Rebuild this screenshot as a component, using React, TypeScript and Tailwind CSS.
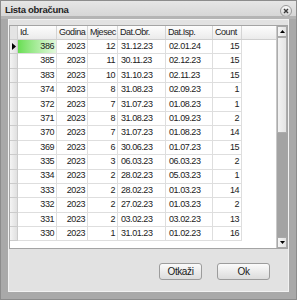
const rows = [
  ["386", "2023", "12", "31.12.23", "02.01.24", "15"],
  ["385", "2023", "11", "30.11.23", "02.12.23", "15"],
  ["383", "2023", "10", "31.10.23", "02.11.23", "15"],
  ["374", "2023", "8", "31.08.23", "02.09.23", "1"],
  ["372", "2023", "7", "31.07.23", "01.08.23", "1"],
  ["371", "2023", "8", "31.08.23", "01.09.23", "2"],
  ["370", "2023", "7", "31.07.23", "01.08.23", "14"],
  ["369", "2023", "6", "30.06.23", "01.07.23", "15"],
  ["335", "2023", "3", "06.03.23", "06.03.23", "2"],
  ["334", "2023", "2", "28.02.23", "05.03.23", "1"],
  ["333", "2023", "2", "28.02.23", "01.03.23", "14"],
  ["332", "2023", "2", "27.02.23", "01.03.23", "2"],
  ["331", "2023", "2", "03.02.23", "03.02.23", "13"],
  ["330", "2023", "1", "31.01.23", "01.02.23", "16"],
];

const cols = [
  { w: "w-[39px]", right: true },
  { w: "w-[31px]", right: true },
  { w: "w-[30px]", right: true },
  { w: "w-[48px]", right: false },
  { w: "w-[47px]", right: false },
  { w: "w-[29px]", right: true },
];

const headers = ["Id.", "Godina", "Mjesec", "Dat.Obr.", "Dat.Isp.", "Count"];

const btn =
  "h-[17px] rounded-[3px] border border-[#9c9c9c] bg-gradient-to-b from-[#fbfbfb] to-[#dcdcdc] text-[10px] tracking-[-0.4px] text-[#1a1a1a] flex items-center justify-center";

export default function App() {
  return (
    <div className="w-[297px] h-[300px] flex flex-col border border-[#8c8c8c] bg-[#dadada] font-['Liberation_Sans',Arial,sans-serif]">
      {/* title bar */}
      <div className="h-[15px] flex items-center justify-between pl-[4px] pr-[4px] bg-gradient-to-b from-[#e6e6e6] to-[#d6d6d6]">
        <span className="text-[9.5px] font-bold tracking-[-0.3px] text-[#1e1e1e] mt-[3px]">Lista obračuna</span>
        <div className="w-[12px] h-[12px] mt-[4px] rounded-full border border-[#9a9a9a] bg-gradient-to-b from-[#fafafa] to-[#d2d2d2] flex items-center justify-center">
          <svg width="6" height="6" viewBox="0 0 6 6">
            <path d="M1 1L5 5M5 1L1 5" stroke="#3a3a3a" strokeWidth="1.4" />
          </svg>
        </div>
      </div>

      {/* frame */}
      <div className="flex-1 flex flex-col bg-[#a9a9a9] border-t-[3px] border-[#b4b4b4] px-[7px] pb-[7px]">
        <div className="flex-1 flex flex-col border border-[#f2f2f2] bg-[#e2e2e2] pt-[5px]">
          {/* grid */}
          <div className="h-[224px] border border-[#a4a4a4] bg-white flex">
            <div className="flex-1 flex flex-col text-[9px] tracking-[-0.45px] text-[#222]">
              {/* header */}
              <div className="h-[14px] flex bg-gradient-to-b from-[#fdfdfd] to-[#ebebeb] border-b border-[#cfcfcf]">
                <div className="w-[8px] border-r border-[#cfcfcf] bg-[#e4e4e4]" />
                {headers.map((h, i) => (
                  <div
                    key={h}
                    className={`${cols[i].w} border-r border-[#d4d4d4] pl-[2px] flex items-center whitespace-nowrap overflow-hidden`}
                  >
                    {h}
                  </div>
                ))}
              </div>
              {rows.map((r, ri) => (
                <div key={ri} className="h-[14.4px] flex">
                  <div className="w-[8px] border-r border-b border-[#cbcbcb] bg-gradient-to-r from-[#f4f4f4] to-[#e0e0e0] flex items-center justify-center">
                    {ri === 0 ? (
                      <svg width="4" height="7" viewBox="0 0 4 7">
                        <path d="M0 0L4 3.5L0 7Z" fill="#000" />
                      </svg>
                    ) : null}
                  </div>
                  {r.map((v, ci) => (
                    <div
                      key={ci}
                      className={`${cols[ci].w} border-r border-b border-[#dedede] flex items-center ${
                        cols[ci].right ? "justify-end pr-[2px]" : "pl-[3px]"
                      } ${
                        ri === 0 && ci === 0
                          ? "bg-gradient-to-r from-[#68de52] to-[#e2f8dc]"
                          : ""
                      }`}
                    >
                      {v}
                    </div>
                  ))}
                </div>
              ))}
            </div>
            {/* scrollbar */}
            <div className="w-[11px] flex flex-col border-l border-[#c8c8c8]">
              <div className="h-[11px] border border-[#a8a8a8] bg-gradient-to-r from-[#f6f6f6] to-[#e2e2e2] flex items-center justify-center">
                <svg width="5" height="3" viewBox="0 0 5 3">
                  <path d="M0 3L2.5 0L5 3Z" fill="#000" />
                </svg>
              </div>
              <div className="h-[96px] border border-[#acacac] bg-gradient-to-r from-[#f2f2f2] to-[#e4e4e4]" />
              <div className="flex-1 bg-[#a3a3a3]" />
              <div className="h-[11px] border border-[#a8a8a8] bg-gradient-to-r from-[#f6f6f6] to-[#e2e2e2] flex items-center justify-center">
                <svg width="5" height="3" viewBox="0 0 5 3">
                  <path d="M0 0L5 0L2.5 3Z" fill="#000" />
                </svg>
              </div>
            </div>
          </div>
          {/* buttons */}
          <div className="flex justify-end gap-[15px] pr-[18px] mt-[14px]">
            <button className={`${btn} w-[43px]`}>Otkaži</button>
            <button className={`${btn} w-[53px]`}>Ok</button>
          </div>
        </div>
      </div>
    </div>
  );
}
